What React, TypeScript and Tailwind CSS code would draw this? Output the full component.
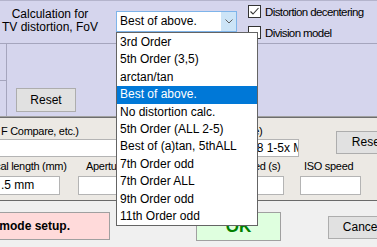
import React from "react";

const items = [
  "3rd Order",
  "5th Order (3,5)",
  "arctan/tan",
  "Best of above.",
  "No distortion calc.",
  "5th Order (ALL 2-5)",
  "Best of (a)tan, 5thALL",
  "7th Order odd",
  "7th Order ALL",
  "9th Order odd",
  "11th Order odd",
];

function CheckBox({ checked }: { checked: boolean }) {
  return (
    <div className="w-[13px] h-[13px] shrink-0 border border-[#333333] bg-white">
      {checked && (
        <svg width="11" height="11" viewBox="0 0 11 11">
          <polyline points="1.5,5.5 4,8 9.5,2" fill="none" stroke="#333" strokeWidth="1.1" />
        </svg>
      )}
    </div>
  );
}

export default function App() {
  return (
    <div className="relative w-[377px] h-[247px] overflow-hidden bg-[#f0f0f0] text-[12px] text-black font-['Liberation_Sans',Arial,sans-serif]">
      {/* Lavender panel */}
      <div className="bg-[#d5d5ed] border-t border-[#b4b4cc]">
        <div className="flex items-start h-[43px] border-b border-[#a5a5bd]">
          <div className="w-[100px] shrink-0 pt-[7px] text-center leading-[13px]">
            <div>Calculation for</div>
            <div>TV distortion, FoV</div>
          </div>
          <div className="ml-[16px] mt-[10px] w-[121px] h-[21px] shrink-0 flex border border-[#7eb4ea] bg-white">
            <div className="flex-1 pl-[3px] leading-[19px] whitespace-nowrap">Best of above.</div>
            <div className="w-[15px] bg-[#cce4f7] flex items-center justify-center">
              <svg width="8" height="5" viewBox="0 0 8 5">
                <polyline points="0.5,0.5 4,4 7.5,0.5" fill="none" stroke="#606060" strokeWidth="1" />
              </svg>
            </div>
          </div>
          <div className="ml-[11px] mt-[4px] flex flex-col gap-[8px] text-[11.5px] tracking-[-0.6px]">
            <div className="flex items-start gap-[4px] h-[13px]">
              <CheckBox checked />
              <span className="leading-[14px] whitespace-nowrap">Distortion decentering</span>
            </div>
            <div className="flex items-start gap-[4px] h-[13px]">
              <CheckBox checked={false} />
              <span className="leading-[14px] whitespace-nowrap">Division model</span>
            </div>
          </div>
        </div>
        <div className="flex h-[72px]">
          <div className="w-[7px] shrink-0 border-r border-[#a5a5bd]">
            <div className="h-[37px] border-b border-[#a5a5bd]" />
          </div>
          <button className="ml-[9px] mt-[44px] w-[60px] h-[24px] bg-[#e1e1e1] border border-[#adadad] leading-[22px] text-center">
            Reset
          </button>
        </div>
        <div className="h-px bg-[#a0a0a0]" />
        <div className="h-px bg-[#6d6d6d]" />
      </div>

      {/* Beige panel */}
      <div className="flex h-[83px] bg-[#ece9e4] border-b border-[#6a6a6a]">
        <div className="w-[336px] shrink-0 pt-[6px] flex flex-col">
          <div className="flex h-[14px] leading-[14px] whitespace-nowrap text-[11px] tracking-[-0.3px]">
            <span className="ml-[1px] w-[176px] shrink-0">F Compare, etc.)</span>
            <span>Lens (or lens type)</span>
          </div>
          <div className="mt-[1px] ml-[-1px] w-[300px] h-[18px] bg-white border border-[#b4b4b4] overflow-hidden whitespace-nowrap leading-[16px] pl-[170px]">
            MP-E 65mm f/2.8 1-5x Macro
          </div>
          <div className="mt-[2px] flex h-[14px] leading-[14px] whitespace-nowrap text-[11px] tracking-[-0.3px]">
            <span className="ml-[-17px] w-[103px] shrink-0">Focal length (mm)</span>
            <span className="w-[115px] shrink-0">Aperture (f-stop)</span>
            <span className="w-[103px] shrink-0">Shutter speed (s)</span>
            <span className="shrink-0">ISO speed</span>
          </div>
          <div className="mt-[3px] flex h-[19px]">
            <div className="ml-[-1px] w-[61px] shrink-0 bg-white border border-[#b4b4b4] leading-[17px] pl-[1px] whitespace-nowrap">.5 mm</div>
            <div className="ml-[18px] w-[61px] shrink-0 bg-white border border-[#b4b4b4]" />
            <div className="ml-[85px] w-[60px] shrink-0 bg-white border border-[#b4b4b4]" />
            <div className="ml-[16px] w-[61px] shrink-0 bg-white border border-[#b4b4b4]" />
          </div>
        </div>
        <button className="mt-[13px] w-[63px] h-[23px] shrink-0 bg-[#e1e1e1] border border-[#adadad] leading-[21px] text-center">
          Reset
        </button>
      </div>

      {/* Bottom buttons */}
      <div className="flex items-start h-[46px]">
        <button className="ml-[-40px] mt-[11px] w-[150px] h-[28px] shrink-0 bg-[#ffdada] border border-[#a0a0a0] flex items-center justify-end pr-[39px] font-bold whitespace-nowrap">
          Imatest mode setup.
        </button>
        <button className="ml-[86px] mt-[11px] w-[85px] h-[29px] shrink-0 bg-[#dfffdf] border border-[#a0a0a0] flex items-center justify-center font-bold text-[17px] text-[#008000]">
          OK
        </button>
        <button className="ml-[47px] mt-[15px] w-[67px] h-[23px] shrink-0 bg-[#e1e1e1] border border-[#adadad] leading-[21px] text-center">
          Cancel
        </button>
      </div>

      {/* Open dropdown list */}
      <div className="absolute left-[116px] top-[32px] w-[142px] z-10 bg-white border border-[#646464] pt-[1px]">
        {items.map((it) => (
          <div
            key={it}
            className={
              it === "Best of above."
                ? "h-[17.4px] leading-[17.4px] pl-[3px] whitespace-nowrap bg-[#0078d7] text-white"
                : "h-[17.4px] leading-[17.4px] pl-[3px] whitespace-nowrap"
            }
          >
            {it}
          </div>
        ))}
      </div>
    </div>
  );
}
